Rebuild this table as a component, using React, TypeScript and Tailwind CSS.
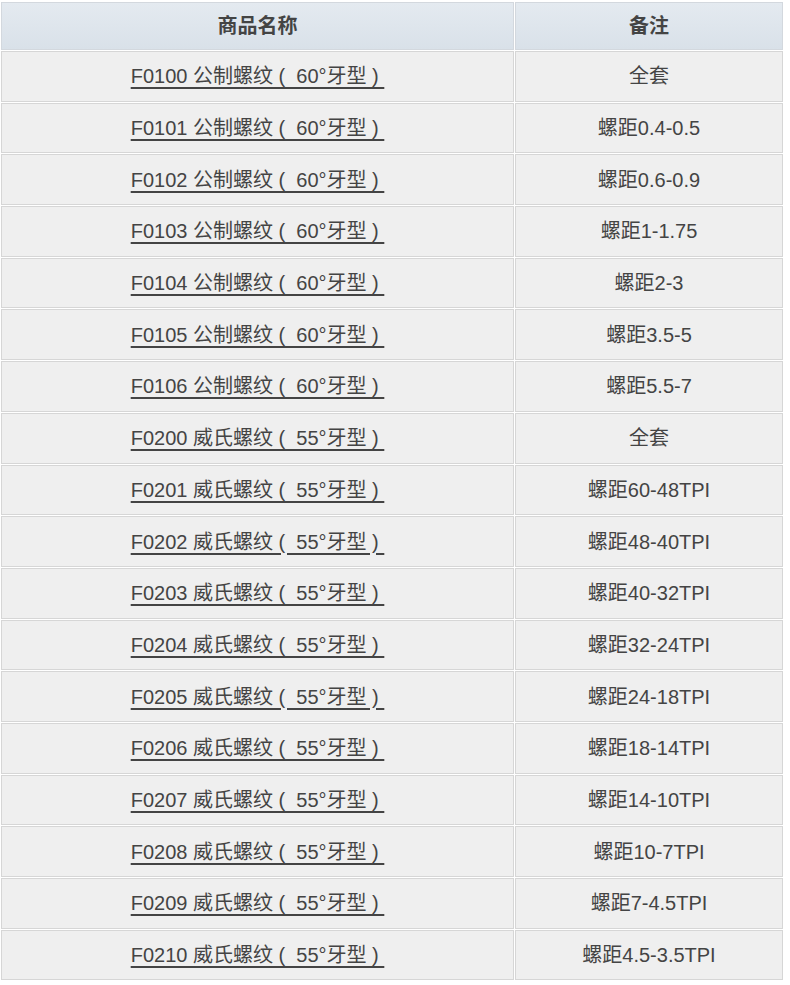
import React from "react";

const data: [string, string, string][] = [
  ["F0100 公制螺纹", "60°牙型", "全套"],
  ["F0101 公制螺纹", "60°牙型", "螺距0.4-0.5"],
  ["F0102 公制螺纹", "60°牙型", "螺距0.6-0.9"],
  ["F0103 公制螺纹", "60°牙型", "螺距1-1.75"],
  ["F0104 公制螺纹", "60°牙型", "螺距2-3"],
  ["F0105 公制螺纹", "60°牙型", "螺距3.5-5"],
  ["F0106 公制螺纹", "60°牙型", "螺距5.5-7"],
  ["F0200 威氏螺纹", "55°牙型", "全套"],
  ["F0201 威氏螺纹", "55°牙型", "螺距60-48TPI"],
  ["F0202 威氏螺纹", "55°牙型", "螺距48-40TPI"],
  ["F0203 威氏螺纹", "55°牙型", "螺距40-32TPI"],
  ["F0204 威氏螺纹", "55°牙型", "螺距32-24TPI"],
  ["F0205 威氏螺纹", "55°牙型", "螺距24-18TPI"],
  ["F0206 威氏螺纹", "55°牙型", "螺距18-14TPI"],
  ["F0207 威氏螺纹", "55°牙型", "螺距14-10TPI"],
  ["F0208 威氏螺纹", "55°牙型", "螺距10-7TPI"],
  ["F0209 威氏螺纹", "55°牙型", "螺距7-4.5TPI"],
  ["F0210 威氏螺纹", "55°牙型", "螺距4.5-3.5TPI"],
];

export default function App() {
  return (
    <div
      className="w-[790px] h-[985px] bg-white pt-[2px] pl-[1px] text-[#444]"
      style={{ fontFamily: '"Liberation Sans", Arial, "Noto Sans CJK SC", sans-serif' }}
    >
      <div className="grid grid-cols-[513px_268px] gap-[1px]">
        <div className="h-[48px] flex items-center justify-center border border-[#d3d8de] bg-gradient-to-b from-[#e4eaf0] to-[#d9e1e9] text-[20px] font-bold text-[#444]">
          商品名称
        </div>
        <div className="h-[48px] flex items-center justify-center border border-[#d3d8de] bg-gradient-to-b from-[#e4eaf0] to-[#d9e1e9] text-[20px] font-bold text-[#444]">
          备注
        </div>
        {data.map(([name, angle, note]) => (
          <React.Fragment key={name}>
            <div className="h-[50.7px] flex items-center justify-center border border-[#d6d6d6] bg-[#efefef] text-[20px]">
              <span className="underline underline-offset-[4px] decoration-[1.5px] whitespace-pre">
                {`${name}\u00a0(\u00a0\u00a0${angle}\u00a0)\u00a0`}
              </span>
            </div>
            <div className="h-[50.7px] flex items-center justify-center border border-[#d6d6d6] bg-[#efefef] text-[20px]">
              {note}
            </div>
          </React.Fragment>
        ))}
      </div>
    </div>
  );
}
